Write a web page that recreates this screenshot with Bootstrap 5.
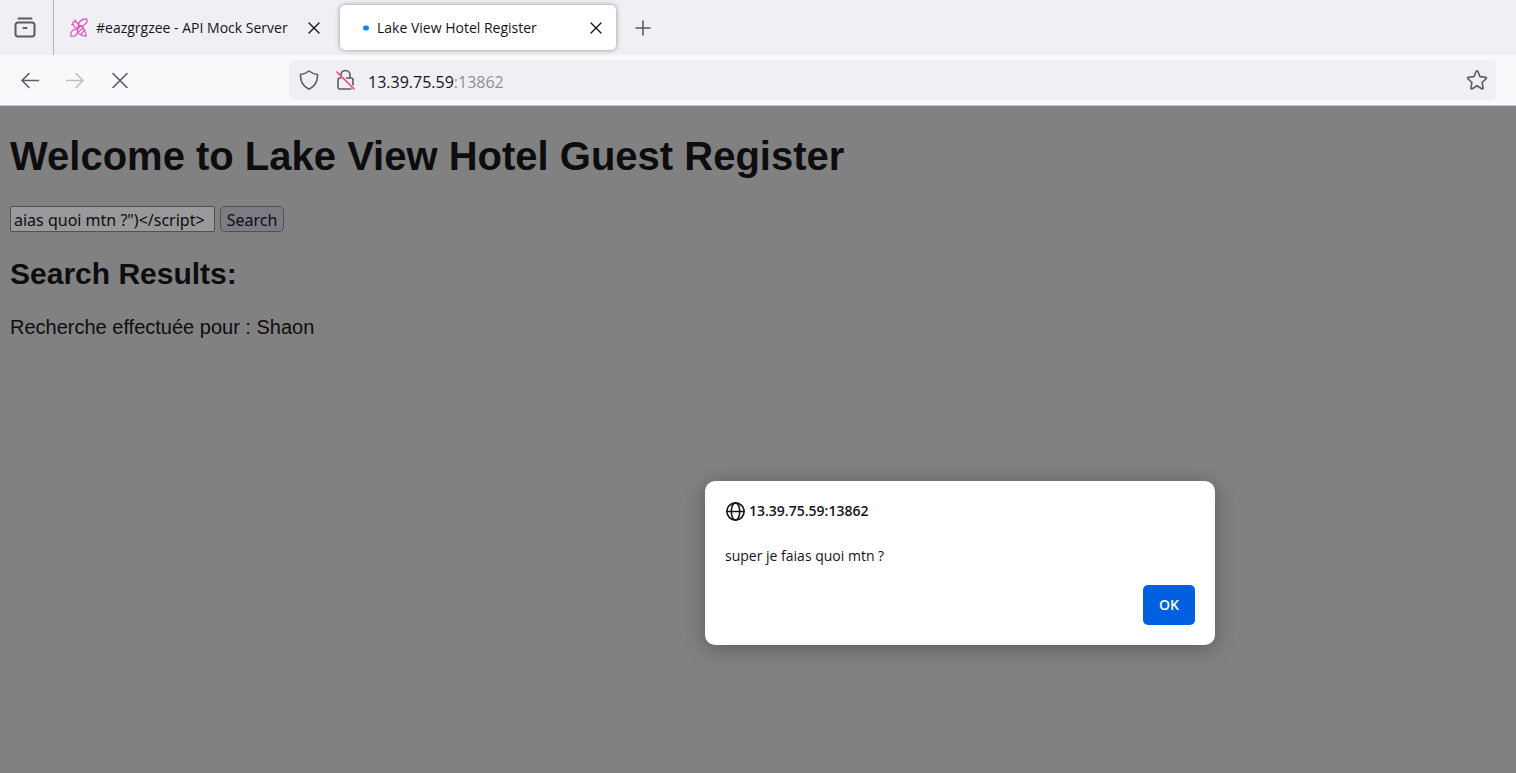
<!DOCTYPE html>
<html lang="fr">
<head>
<meta charset="utf-8">
<meta name="viewport" content="width=device-width, initial-scale=1">
<title>Lake View Hotel Register</title>
<link href="https://cdn.jsdelivr.net/npm/bootstrap@5.3.0/dist/css/bootstrap.min.css" rel="stylesheet">
<style>
  body { font-family: "Open Sans", "Noto Sans", sans-serif; font-size: 14px; line-height: 20px; color: #15141a; }
  svg { display: block; flex: none; fill: none; stroke: currentColor; stroke-width: 1.6; stroke-linecap: round; stroke-linejoin: round; }
  .icon-btn { display: flex; align-items: center; justify-content: center; padding: 0; border: 0; background: none; color: #5b5b66; width: 45px; height: 40px; }
  .icon-btn:disabled { color: #bfbfc5; }
  .tab-strip { height: 55px; background: #f0eff4; }
  .recent { width: 54px; height: 55px; border-right: 1px solid #b5b5ba; padding-right: 3px; }
  .recent svg { stroke-width: 2; }
  .browser-tab { height: 45px; width: 276px; border-radius: 5px; }
  .browser-tab a { padding-top: 1px; }
  .browser-tab .icon-btn { width: 24px; height: 24px; color: #15141a; }
  .browser-tab .icon-btn svg { stroke-width: 1.4; }
  .bee { stroke: #e04bbd; stroke-width: 1.3; }
  .loading { stroke: none; fill: #0a84ff; margin: 0 7px 0 22px; }
  .current { background: #fff; box-shadow: 0 0 5px rgba(0,0,0,.4); margin-left: 10px; }
  .tool-row { height: 51px; background: #f9f9fb; border-bottom: 1px solid #ccccd0; padding: 0 20px 0 7px; }
  .nav-group { width: 282px; }
  .url-bar { height: 40px; background: #f0eff4; border-radius: 5px; padding: 0 8px 0 9px; color: #5b5b66; }
  .url-text { font-size: 16px; color: #15141a; padding: 3px 0 0 12px; }
  .url-text span { color: #8f8f98; }
  .url-bar .icon-btn { width: 22px; }
  .viewport { background: #818182; padding: 24px 10px; font-family: "Liberation Sans", Arial, sans-serif; font-size: 20px; line-height: 24px; color: #0d0d0f; }
  .viewport h1 { font-size: 40px; font-weight: 700; line-height: 52px; margin: 0 0 24px; }
  .viewport h2 { font-size: 30px; font-weight: 700; line-height: 36px; margin: 24px 0 23px; }
  .search-form { gap: 5px; }
  .query, .search-btn { font: 16px/20px "Noto Sans", sans-serif; height: 26px; color: #0d0d0f; border: 1px solid #50505a; }
  .query { width: 205px; padding: 1px 3px 0; background: #99999b; border-radius: 2px; }
  .search-btn { width: 64px; padding: 1px 0 0; background: #7c7c84; border-radius: 5px; }
  .alert-box { position: absolute; left: 705px; top: 375px; width: 510px; padding: 20px; background: #fff; border-radius: 10px; box-shadow: 0 3px 20px rgba(0,0,0,.3); font: 14px/20px "Open Sans", "Noto Sans", sans-serif; color: #15141a; }
  .alert-box p { margin: 25px 0 19px; }
  .ok { width: 52px; height: 40px; padding: 0; border: 0; border-radius: 5px; background: #0061e0; color: #fbfbfe; font-weight: 600; }
</style>
</head>
<body class="d-flex flex-column min-vh-100">
<header>
  <div class="tab-strip d-flex align-items-center">
    <div class="recent d-flex align-items-center justify-content-center">
      <button class="icon-btn" aria-label="Onglets récents"><svg width="22" height="22" viewBox="0 0 22 22"><path d="M4.500 1.500h13M4 5.500h14a2.500 2.500 0 0 1 2.500 2.500v9a2.500 2.500 0 0 1-2.500 2.500H4A2.500 2.500 0 0 1 1.500 17V8A2.500 2.500 0 0 1 4 5.500ZM9.500 11h3"/></svg></button>
    </div>
    <div class="browser-tab d-flex align-items-center">
      <svg class="bee ms-3 me-2" viewBox="0 0 20 22" width="18" height="22"><path d="M9.500 8.500C9 4 14 0 18.500 1c2 3-2 8-8 8.500M8.500 12.500C4 11.500 0 15 1 20c5 1 8-2.500 7.500-7M9.500 8.500C12 7 17 12 18 20c-7 0-11-4-9.500-7.500M3 4.500l2-.5 1-2 .5 2.500c2 .5 3 2 3 4L8 11c-2 0-4-1.500-4-3.500L2 7l1.500-1M10 15l5-5M12 18l4.500-5M8.500 12.500l3.500-4"/></svg>
      <a href="#" class="text-reset text-decoration-none text-nowrap flex-grow-1">#eazgrgzee - API Mock Server</a>
      <button class="icon-btn me-1" aria-label="Fermer l’onglet"><svg width="12" height="12" viewBox="0 0 12 12"><path d="m1 1 10 10m0-10L1 11"/></svg></button>
    </div>
    <div class="browser-tab current d-flex align-items-center">
      <svg class="loading" width="8" height="6" viewBox="0 0 8 6"><rect x="1" y=".5" width="6" height="5" rx="2.500"/></svg>
      <a href="#" class="text-reset text-decoration-none text-nowrap flex-grow-1">Lake View Hotel Register</a>
      <button class="icon-btn me-2" aria-label="Fermer l’onglet"><svg width="12" height="12" viewBox="0 0 12 12"><path d="m1 1 10 10m0-10L1 11"/></svg></button>
    </div>
    <button class="icon-btn ms-1" aria-label="Nouvel onglet"><svg width="16" height="16" viewBox="0 0 16 16"><path d="M8 1v14M1 8h14"/></svg></button>
  </div>
  <div class="tool-row d-flex align-items-center">
    <nav class="nav-group d-flex flex-shrink-0">
      <button class="icon-btn" aria-label="Reculer"><svg width="20" height="18" viewBox="0 0 20 18"><path d="M18.500 9.500H2m7-7-7 7 7 7"/></svg></button>
      <button class="icon-btn" aria-label="Avancer" disabled><svg width="20" height="18" viewBox="0 0 20 18"><path d="M1.500 9.500H18m-7-7 7 7-7 7"/></svg></button>
      <button class="icon-btn" aria-label="Arrêter"><svg width="16" height="16" viewBox="0 0 16 16"><path d="m1 1.500 14 14m0-14-14 14"/></svg></button>
    </nav>
    <div class="url-bar d-flex align-items-center flex-grow-1">
      <svg width="22" height="20" viewBox="0 0 22 20"><path d="M11 1c2.500 2 5 3 8.500 3.500C19.800 11.500 17 16.500 11 19.200 5 16.500 2.200 11.500 2.500 4.500 6 4 8.500 3 11 1Z"/></svg>
      <svg class="ms-3" width="20" height="22" viewBox="0 0 20 22"><path d="M5 6c0-3 2-4.500 4.500-4.500S14 3.500 14 6.500V9h1a2 2 0 0 1 2 2v5M5 9H4a2 2 0 0 0-2 2v7a2 2 0 0 0 2 2h11M10.500 9H14"/><path d="m1 3 17 17" stroke="#ff3b6b"/></svg>
      <div class="url-text flex-grow-1">13.39.75.59<span>:13862</span></div>
      <button class="icon-btn" aria-label="Marquer cette page"><svg width="22" height="22" viewBox="0 0 22 22"><path d="M10.200 2.300q.8-1.200 1.600 0L14 7.600l5.700.6q1.200.5.400 1.500l-4 3.800 1 5.500q-.2 1.200-1.300.7L11 16.800l-4.800 2.900q-1.100.5-1.300-.7l1-5.500-4-3.800q-.8-1 .4-1.500L8 7.600Z"/></svg></button>
    </div>
  </div>
</header>
<main class="viewport position-relative flex-grow-1">
  <h1>Welcome to Lake View Hotel Guest Register</h1>
  <form class="search-form d-flex" onsubmit="return false">
    <input class="query" type="text" aria-label="Search" value="aias quoi mtn ?&quot;)&lt;/script&gt;">
    <button class="search-btn" type="submit">Search</button>
  </form>
  <h2>Search Results:</h2>
  <p class="m-0">Recherche effectuée pour : Shaon</p>
  <div class="alert-box" role="alertdialog" aria-labelledby="origin" aria-describedby="message">
    <div class="d-flex align-items-center gap-1">
      <svg width="20" height="20" viewBox="0 0 20 20" stroke-width="2"><circle cx="10.500" cy="10.500" r="8.600"/><ellipse cx="10.500" cy="10.500" rx="4.200" ry="8.600"/><path d="M2 10.500h17"/></svg>
      <strong id="origin" class="fw-semibold">13.39.75.59:13862</strong>
    </div>
    <p id="message">super je faias quoi mtn ?</p>
    <div class="d-flex justify-content-end"><button class="ok">OK</button></div>
  </div>
</main>
<script src="https://cdn.jsdelivr.net/npm/bootstrap@5.3.0/dist/js/bootstrap.bundle.min.js"></script>
</body>
</html>
